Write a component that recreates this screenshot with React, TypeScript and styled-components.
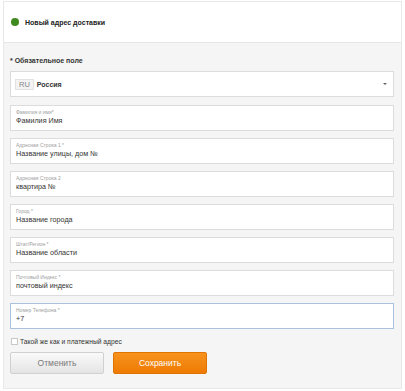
import React from "react";
import styled, { createGlobalStyle } from "styled-components";

const Global = createGlobalStyle`
  html, body { margin: 0; padding: 0; background: #ffffff; }
  body { font-family: "Liberation Sans", Arial, sans-serif; }
  * { box-sizing: border-box; }
`;

const Card = styled.div`
  margin: 1px 0 0 3px;
  width: 399px;
  border: 1px solid #e8e8e8;
  background: #f5f5f5;
`;

const Header = styled.div`
  height: 41px;
  background: #ffffff;
  border-bottom: 1px solid #e6e6e6;
  display: flex;
  align-items: center;
  padding-left: 7px;
  gap: 6px;
`;

const Dot = styled.span`
  width: 8px;
  height: 8px;
  border-radius: 50%;
  background: #3f8a1f;
  flex: none;
`;

const Title = styled.span`
  font-size: 7px;
  font-weight: bold;
  color: #222;
`;

const Body = styled.div`
  padding: 13px 7px 14px 6px;
  display: flex;
  flex-direction: column;
`;

const Required = styled.div`
  font-size: 7px;
  font-weight: bold;
  color: #333;
  line-height: 10px;
  height: 10px;
  margin-bottom: 5px;
`;

const SelectBox = styled.div`
  height: 26px;
  background: #fff;
  border: 1px solid #dcdcdc;
  display: flex;
  align-items: center;
  padding: 0 6px 0 4px;
  margin-bottom: 8px;
`;

const Badge = styled.span`
  font-size: 7.5px;
  color: #888;
  background: #f3f3f3;
  border: 1px solid #e2e2e2;
  height: 11px;
  line-height: 9px;
  padding: 0 3px;
  margin-right: 3px;
`;

const Country = styled.span`
  font-size: 7px;
  font-weight: bold;
  color: #333;
  flex: 1;
`;

const Caret = styled.span`
  width: 0;
  height: 0;
  border-left: 2px solid transparent;
  border-right: 2px solid transparent;
  border-top: 2px solid #666;
`;

const Fields = styled.div`
  display: flex;
  flex-direction: column;
  gap: 7px;
`;

const Field = styled.div<{ $active?: boolean }>`
  height: 26px;
  background: #fff;
  border: 1px solid ${(p) => (p.$active ? "#a9c1dd" : "#dcdcdc")};
  padding: 2px 5px 0;
  display: flex;
  flex-direction: column;
`;

const Label = styled.span`
  font-size: 5px;
  color: #a0a0a0;
  line-height: 8px;
`;

const Value = styled.span`
  font-size: 7.2px;
  color: #333;
  line-height: 10px;
`;

const CheckRow = styled.label`
  display: flex;
  align-items: center;
  gap: 2px;
  height: 10px;
  margin: 7px 0 6px 1px;
  font-size: 6.7px;
  color: #333;
`;

const Box = styled.span`
  width: 7px;
  height: 7px;
  border: 1px solid #c8c8c8;
  background: #fff;
`;

const Buttons = styled.div`
  display: flex;
  gap: 9px;
`;

const Btn = styled.button<{ $primary?: boolean }>`
  width: 94px;
  height: 22px;
  border-radius: 2px;
  font-family: "Liberation Sans", Arial, sans-serif;
  font-size: 8.5px;
  padding: 0;
  cursor: pointer;
  color: ${(p) => (p.$primary ? "#fff" : "#7a7a7a")};
  border: 1px solid ${(p) => (p.$primary ? "#e07400" : "#d0d0d0")};
  background: ${(p) =>
    p.$primary
      ? "linear-gradient(#f7921e, #ee7b02)"
      : "linear-gradient(#fafafa, #e4e4e4)"};
`;

const fields = [
  { label: "Фамилия и имя*", value: "Фамилия Имя" },
  { label: "Адресная Строка 1 *", value: "Название улицы, дом №" },
  { label: "Адресная Строка 2", value: "квартира №" },
  { label: "Город *", value: "Название города" },
  { label: "Штат/Регион *", value: "Название области" },
  { label: "Почтовый Индекс *", value: "почтовый индекс" },
  { label: "Номер Телефона *", value: "+7", active: true },
];

export default function App() {
  return (
    <>
      <Global />
      <Card>
        <Header>
          <Dot />
          <Title>Новый адрес доставки</Title>
        </Header>
        <Body>
          <Required>* Обязательное поле</Required>
          <SelectBox>
            <Badge>RU</Badge>
            <Country>Россия</Country>
            <Caret />
          </SelectBox>
          <Fields>
            {fields.map((f) => (
              <Field key={f.label} $active={f.active}>
                <Label>{f.label}</Label>
                <Value>{f.value}</Value>
              </Field>
            ))}
          </Fields>
          <CheckRow>
            <Box />
            Такой же как и платежный адрес
          </CheckRow>
          <Buttons>
            <Btn>Отменить</Btn>
            <Btn $primary>Сохранить</Btn>
          </Buttons>
        </Body>
      </Card>
    </>
  );
}
